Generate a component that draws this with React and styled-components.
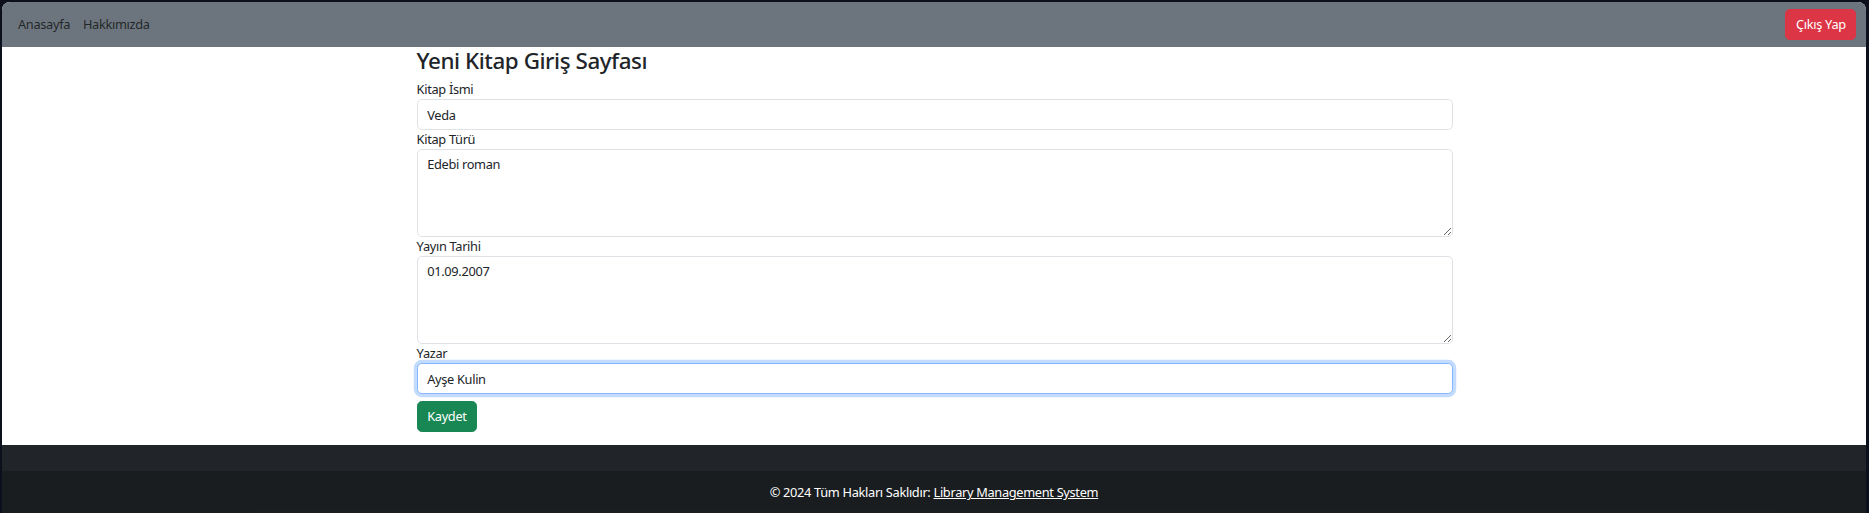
import styled, { createGlobalStyle } from "styled-components";

const GlobalStyle = createGlobalStyle`
  * { box-sizing: border-box; }
  html, body { margin: 0; padding: 0; background: #0c0f1c; }
  body {
    font-family: "Segoe UI", "Noto Sans", "Liberation Sans", sans-serif;
    font-size: 12.8px;
    line-height: 1.5;
    letter-spacing: -0.025em;
    color: #212529;
  }
`;

const Frame = styled.div`
  padding: 2px 3px 0 2px;
  height: 513px;
  overflow: hidden;
`;

const Window = styled.div`
  background: #fff;
  border-radius: 8px 8px 0 0;
  overflow: hidden;
`;

const Navbar = styled.nav`
  display: flex;
  align-items: center;
  justify-content: space-between;
  height: 45px;
  padding: 0 9.6px;
  background: #6c757d;
`;

const NavList = styled.ul`
  display: flex;
  list-style: none;
  margin: 0;
  padding: 0;
`;

const NavLink = styled.a`
  display: block;
  padding: 6.4px;
  color: rgba(0, 0, 0, 0.7);
  text-decoration: none;
  line-height: 19.2px;
`;

const Button = styled.button`
  font-family: inherit;
  font-size: 12.8px;
  letter-spacing: inherit;
  line-height: 19.2px;
  height: 30.4px;
  padding: 4.8px 9.6px;
  border: 1px solid ${(p) => p.$bg};
  border-radius: 4.8px;
  background: ${(p) => p.$bg};
  color: #fff;
  cursor: pointer;
`;

const Main = styled.main`
  padding: 1px 9.6px 13px;
  width: 1056px;
  margin: 0 auto;
  position: relative;
  left: 1px;
`;

const Title = styled.h3`
  margin: 0 0 5.4px;
  font-size: 22.4px;
  font-weight: 500;
  line-height: 1.2;
  letter-spacing: -0.02em;
`;

const Field = styled.div`
  display: flex;
  flex-direction: column;
`;

const Label = styled.label`
  line-height: 19.2px;
`;

const inputBase = `
  width: 100%;
  font-family: inherit;
  font-size: 12.8px;
  letter-spacing: inherit;
  line-height: 19.2px;
  color: #212529;
  background: #fff;
  border: 1px solid #dee2e6;
  border-radius: 4.8px;
  padding: 4.8px 9.6px;
  outline: none;
  margin: 0;
`;

const Input = styled.input`
  ${inputBase}
  height: 30.4px;
  ${(p) =>
    p.$focused &&
    `border-color: #86b7fe; box-shadow: 0 0 0 3.2px rgba(13, 110, 253, 0.25);`}
`;

const TextArea = styled.textarea`
  ${inputBase}
  display: block;
  height: 88px;
  resize: vertical;
`;

const SaveRow = styled.div`
  margin-top: 7.4px;
`;

const Footer = styled.footer`
  background: #212529;
  color: #fff;
`;

const FooterTop = styled.div`
  height: 26px;
`;

const FooterBottom = styled.div`
  background: rgba(0, 0, 0, 0.2);
  text-align: center;
  padding: 12.8px;
  line-height: 19.2px;
`;

const FooterLink = styled.a`
  color: #fff;
  text-decoration: underline;
`;

export default function App() {
  return (
    <>
      <GlobalStyle />
      <Frame>
        <Window>
          <Navbar>
            <NavList>
              <li><NavLink href="#">Anasayfa</NavLink></li>
              <li><NavLink href="#">Hakkımızda</NavLink></li>
            </NavList>
            <Button $bg="#dc3545">Çıkış Yap</Button>
          </Navbar>
          <Main>
            <Title>Yeni Kitap Giriş Sayfası</Title>
            <Field>
              <Label>Kitap İsmi</Label>
              <Input defaultValue="Veda" />
            </Field>
            <Field>
              <Label>Kitap Türü</Label>
              <TextArea defaultValue="Edebi roman" />
            </Field>
            <Field>
              <Label>Yayın Tarihi</Label>
              <TextArea defaultValue="01.09.2007" />
            </Field>
            <Field>
              <Label>Yazar</Label>
              <Input $focused defaultValue="Ayşe Kulin" />
            </Field>
            <SaveRow>
              <Button $bg="#198754">Kaydet</Button>
            </SaveRow>
          </Main>
          <Footer>
            <FooterTop />
            <FooterBottom>
              © 2024 Tüm Hakları Saklıdır: <FooterLink href="#">Library Management System</FooterLink>
            </FooterBottom>
          </Footer>
        </Window>
      </Frame>
    </>
  );
}
